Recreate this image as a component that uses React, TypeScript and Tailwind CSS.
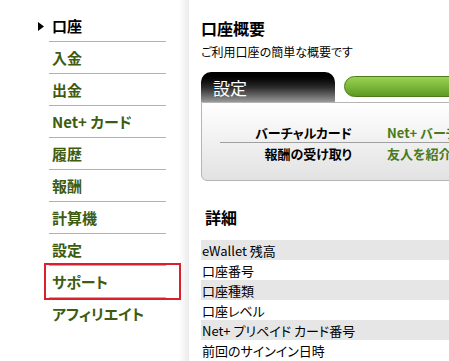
import React from "react";

const font = "[font-family:'Noto_Sans_CJK_JP','Noto_Sans',sans-serif] [font-feature-settings:'palt']";

const navItems = ["入金", "出金", "Net+ カード", "履歴", "報酬", "計算機", "設定", "サポート", "アフィリエイト"];

const details = [
  "eWallet 残高",
  "口座番号",
  "口座種類",
  "口座レベル",
  "Net+ プリペイド カード番号",
  "前回のサインイン日時",
];

export default function App() {
  return (
    <div className={`w-[449px] h-[361px] overflow-hidden bg-white flex ${font}`}>
      {/* Sidebar */}
      <div className="w-[179px] shrink-0 pt-[10px] flex flex-col">
        <div className="relative ml-[49px] w-[117px] h-[32px] border-b border-[#b0b0b0] flex items-center pl-[3px] pb-[1px]">
          <svg className="absolute left-[-11px] top-[12px]" width="6" height="9" viewBox="0 0 6 9">
            <path d="M0 0 L6 4.5 L0 9 Z" fill="#000" />
          </svg>
          <span className="text-[15px] font-bold leading-none text-black">口座</span>
        </div>
        {navItems.map((item, i) => (
          <div
            key={item}
            className={`relative ml-[49px] w-[117px] h-[32px] flex items-center pl-[3px] pb-[1px] ${
              i < navItems.length - 1 ? "border-b border-[#b0b0b0]" : ""
            }`}
          >
            <span className="text-[15px] font-bold leading-none text-[#3d5c0f]">{item}</span>
            {item === "サポート" && (
              <div className="absolute left-[-5px] top-[-3px] w-[137px] h-[37px] border-2 border-[#d9202c]" />
            )}
          </div>
        ))}
      </div>
      {/* Edge shading */}
      <div className="w-[10px] shrink-0 bg-gradient-to-r from-white to-[#ebebeb]" />
      {/* Main */}
      <div className="w-[400px] shrink-0 pl-[12px] pt-[18px] flex flex-col">
        <div className="text-[16px] font-bold leading-[20px] text-black">口座概要</div>
        <div className="mt-[6px] text-[12px] leading-[16px] text-black">ご利用口座の簡単な概要です</div>
        <div className="mt-[12px] flex items-start h-[30px]">
          <div className="w-[134px] h-[30px] rounded-t-[10px] bg-gradient-to-b from-black via-[#2a2a2a] to-[#9a9a9a] flex items-center pl-[12px]">
            <span className="text-[17px] leading-none text-white">設定</span>
          </div>
          <div className="mt-[4px] ml-[9px] w-[200px] h-[21px] rounded-l-full border border-[#4a7a1a] bg-gradient-to-b from-[#9ad152] via-[#7cb83a] to-[#5e9a22]" />
        </div>
        <div className="h-[79px] border border-[#b5b5b5] rounded-bl-[6px] bg-gradient-to-b from-white to-[#e2e2e2] pt-[19px] flex flex-col">
          <div className="flex items-center h-[20px]">
            <div className="w-[150px] text-right text-[13px] font-bold text-black leading-none">バーチャルカード</div>
            <div className="ml-[35px] text-[13px] font-bold text-[#4a7a1a] leading-none whitespace-nowrap">Net+ バーチャルカード</div>
          </div>
          <div className="ml-[18px] border-t border-[#a0a0a0]" />
          <div className="flex items-center h-[20px]">
            <div className="w-[150px] text-right text-[13px] font-bold text-black leading-none">報酬の受け取り</div>
            <div className="ml-[35px] text-[13px] font-bold text-[#4a7a1a] leading-none whitespace-nowrap">友人を紹介する</div>
          </div>
        </div>
        <div className="mt-[26px] pl-[4px] text-[16px] font-bold leading-[20px] text-black">詳細</div>
        <div className="mt-[13px] flex flex-col">
          {details.map((d, i) => (
            <div
              key={d}
              className={`h-[20px] flex items-center pl-[1px] text-[13px] leading-none text-black ${
                i % 2 === 0 ? "bg-[#e6e6e6]" : "bg-white"
              }`}
            >
              {d}
            </div>
          ))}
        </div>
      </div>
    </div>
  );
}
